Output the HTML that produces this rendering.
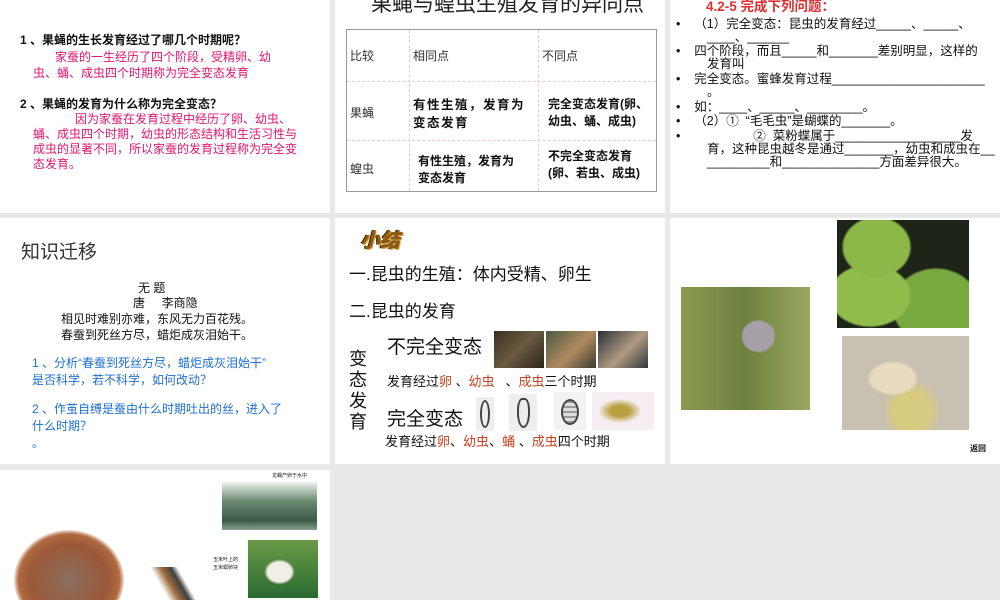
<!DOCTYPE html>
<html><head><meta charset="utf-8"><style>
*{margin:0;padding:0;box-sizing:border-box}
body{width:1000px;height:600px;background:#e8e8e8;position:relative;overflow:hidden;font-family:"Liberation Sans","Noto Sans CJK SC",sans-serif;color:#111}
.s{position:absolute;background:#fff;overflow:hidden}
.a{position:absolute;white-space:nowrap}
.pk{color:#e0156e}
.bl{color:#1f6fd0}
.rd{color:#c8401e}
.img{position:absolute}
</style></head><body>

<!-- slide 1 -->
<div class="s" style="left:0;top:0;width:330px;height:213px">
<div class="a" style="left:20px;top:31px;font-size:12px;font-weight:bold">1 、果蝇的生长发育经过了哪几个时期呢？</div>
<div class="a pk" style="left:55px;top:49px;font-size:12px;line-height:16px">家蚕的一生经历了四个阶段，受精卵、幼</div>
<div class="a pk" style="left:33px;top:64px;font-size:12px">虫、蛹、成虫四个时期称为完全变态发育</div>
<div class="a" style="left:20px;top:95px;font-size:12px;font-weight:bold">2 、果蝇的发育为什么称为完全变态？</div>
<div class="a pk" style="left:33px;top:112px;font-size:12px;line-height:15px;white-space:normal;width:272px;text-indent:42px">因为家蚕在发育过程中经历了卵、幼虫、蛹、成虫四个时期，幼虫的形态结构和生活习性与成虫的显著不同，所以家蚕的发育过程称为完全变态发育。</div>
</div>

<!-- slide 2 -->
<div class="s" style="left:335px;top:0;width:330px;height:213px">
<div class="a" style="left:36px;top:-12px;font-size:21px;color:#222">果蝇与蝗虫生殖发育的异同点</div>
<div style="position:absolute;left:11px;top:29px;width:311px;height:163px;border:1px solid #999"></div>
<div style="position:absolute;left:12px;top:81px;width:309px;border-top:1px dashed #f0c8d0"></div>
<div style="position:absolute;left:12px;top:140px;width:309px;border-top:1px dashed #f0c8d0"></div>
<div style="position:absolute;left:74px;top:30px;height:161px;border-left:1px dashed #f0c8d0"></div>
<div style="position:absolute;left:203px;top:30px;height:161px;border-left:1px dashed #f0c8d0"></div>
<div class="a" style="left:15px;top:47px;font-size:12px;color:#333">比较</div>
<div class="a" style="left:78px;top:47px;font-size:12px;color:#333">相同点</div>
<div class="a" style="left:207px;top:47px;font-size:12px;color:#333">不同点</div>
<div class="a" style="left:15px;top:104px;font-size:12px;color:#333">果蝇</div>
<div class="a" style="left:15px;top:160px;font-size:12px;color:#333">蝗虫</div>
<div class="a" style="left:78px;top:96px;font-size:12.5px;line-height:18px;letter-spacing:1.5px;font-weight:bold">有性生殖，发育为<br>变态发育</div>
<div class="a" style="left:213px;top:96px;font-size:12px;line-height:17px;font-weight:bold">完全变态发育(卵、<br>幼虫、蛹、成虫)</div>
<div class="a" style="left:83px;top:153px;font-size:12px;line-height:17px;font-weight:bold">有性生殖，发育为<br>变态发育</div>
<div class="a" style="left:213px;top:148px;font-size:12px;line-height:17px;font-weight:bold">不完全变态发育<br>(卵、若虫、成虫)</div>
</div>

<!-- slide 3 -->
<div class="s" style="left:670px;top:0;width:330px;height:213px;font-size:12.5px;line-height:13px">
<div class="a" style="left:36px;top:0;font-size:13.5px;font-weight:bold;color:#e03030">4.2-5 完成下列问题：</div>
<div class="a" style="left:6px;top:18px">•&nbsp;&nbsp;&nbsp; （1）完全变态：昆虫的发育经过_____、_____、</div>
<div class="a" style="left:37px;top:31px">____、______</div>
<div class="a" style="left:6px;top:45px">•&nbsp;&nbsp;&nbsp; 四个阶段，而且_____和_______差别明显，这样的</div>
<div class="a" style="left:37px;top:58px">发育叫</div>
<div class="a" style="left:6px;top:73px">•&nbsp;&nbsp;&nbsp; 完全变态。蜜蜂发育过程______________________</div>
<div class="a" style="left:37px;top:86px">。</div>
<div class="a" style="left:6px;top:101px">•&nbsp;&nbsp;&nbsp; 如：____、_____、________。</div>
<div class="a" style="left:6px;top:115px">•&nbsp;&nbsp;&nbsp; （2）①&nbsp; “毛毛虫”是蝴蝶的_______。</div>
<div class="a" style="left:6px;top:130px">•&nbsp;&nbsp;&nbsp;&nbsp;&nbsp;&nbsp;&nbsp;&nbsp;&nbsp;&nbsp;&nbsp;&nbsp;&nbsp;&nbsp;&nbsp;&nbsp;&nbsp;&nbsp;&nbsp;&nbsp; ②&nbsp; 菜粉蝶属于__________________发</div>
<div class="a" style="left:37px;top:143px">育，这种昆虫越冬是通过_______，幼虫和成虫在__</div>
<div class="a" style="left:37px;top:156px">_________和______________方面差异很大。</div>
</div>

<!-- slide 4 -->
<div class="s" style="left:0;top:218px;width:330px;height:246px">
<div class="a" style="left:21px;top:19px;font-size:19px;color:#333">知识迁移</div>
<div class="a" style="left:138px;top:61px;font-size:12px">无 题</div>
<div class="a" style="left:133px;top:76px;font-size:12px">唐&nbsp;&nbsp;&nbsp;&nbsp; 李商隐</div>
<div class="a" style="left:61px;top:92px;font-size:12px">相见时难别亦难，东风无力百花残。</div>
<div class="a" style="left:61px;top:108px;font-size:12px">春蚕到死丝方尽，蜡炬成灰泪始干。</div>
<div class="a bl" style="left:32px;top:137px;font-size:12px;line-height:17px">1 、分析“春蚕到死丝方尽，蜡炬成灰泪始干”<br>是否科学，若不科学，如何改动？</div>
<div class="a bl" style="left:32px;top:183px;font-size:12px;line-height:17px">2 、作茧自缚是蚕由什么时期吐出的丝，进入了<br>什么时期？<br>。</div>
</div>

<!-- slide 5 -->
<div class="s" style="left:335px;top:218px;width:330px;height:246px">
<div class="a" style="left:25px;top:6px;font-size:20px;font-weight:900;color:#8a5a10;font-style:italic;text-shadow:1px 1px 0 #d8a040,-1px 0 0 #3a2000">小结</div>
<div class="a" style="left:14px;top:42px;font-size:17px">一.昆虫的生殖：体内受精、卵生</div>
<div class="a" style="left:14px;top:79px;font-size:17px">二.昆虫的发育</div>
<div class="a" style="left:52px;top:114px;font-size:19px">不完全变态</div>
<div class="a" style="left:14px;top:131px;font-size:18px;line-height:21px;white-space:normal;width:20px">变态发育</div>
<div class="a" style="left:52px;top:153px;font-size:13px">发育经过<span class="rd">卵</span> 、<span class="rd">幼虫</span>&nbsp;&nbsp; 、<span class="rd">成虫</span>三个时期</div>
<div class="a" style="left:52px;top:186px;font-size:19px">完全变态</div>
<div class="a" style="left:50px;top:213px;font-size:13px">发育经过<span class="rd">卵</span>、<span class="rd">幼虫</span>、<span class="rd">蛹</span> 、<span class="rd">成虫</span>四个时期</div>
<div class="img" style="left:159px;top:113px;width:50px;height:37px;background:linear-gradient(135deg,#3a3020,#6a5a40 50%,#2a2418)"></div>
<div class="img" style="left:211px;top:113px;width:50px;height:37px;background:linear-gradient(135deg,#4a5a40,#b08a60 55%,#3a3a30)"></div>
<div class="img" style="left:263px;top:113px;width:50px;height:37px;background:linear-gradient(135deg,#2a3038,#b09a80 55%,#303840)"></div>
<div class="img" style="left:141px;top:179px;width:18px;height:34px;background:#eee"><div style="margin:3px 4px;width:10px;height:28px;border:2px solid #444;border-radius:50%"></div></div>
<div class="img" style="left:174px;top:176px;width:28px;height:37px;background:#eee"><div style="margin:4px 8px;width:13px;height:30px;border:2px solid #444;border-radius:40% 40% 50% 50%"></div></div>
<div class="img" style="left:219px;top:174px;width:32px;height:38px;background:#f2f2f2"><div style="margin:7px 7px;width:18px;height:26px;border:2px solid #444;border-radius:50%;background:repeating-linear-gradient(#999 0 2px,#ddd 2px 5px)"></div></div>
<div class="img" style="left:257px;top:174px;width:62px;height:38px;background:radial-gradient(ellipse at 45% 50%,#b8a040 0 20%,#f6eef2 45%)"></div>
</div>

<!-- slide 6 -->
<div class="s" style="left:670px;top:218px;width:330px;height:246px">
<div class="img" style="left:11px;top:69px;width:129px;height:123px;background:radial-gradient(ellipse at 60% 40%,#a8a0a8 0 14%,transparent 16%),linear-gradient(90deg,#8a9a50,#6e8040 50%,#9aa860)"></div>
<div class="img" style="left:167px;top:2px;width:132px;height:108px;background:radial-gradient(ellipse at 30% 25%,#8cb848 0 25%,transparent 27%),radial-gradient(ellipse at 25% 70%,#90bc4c 0 28%,transparent 30%),radial-gradient(ellipse at 75% 80%,#7aa840 0 30%,transparent 32%),#1e2418"></div>
<div class="img" style="left:172px;top:118px;width:127px;height:94px;background:radial-gradient(ellipse at 40% 45%,#e8dcc0 0 20%,transparent 24%),radial-gradient(ellipse at 55% 80%,#d8cc80 0 18%,transparent 30%),#c8c0b0"></div>
<div class="a" style="left:300px;top:225px;font-size:8px;font-weight:bold">返回</div>
</div>

<!-- slide 7 -->
<div class="s" style="left:0;top:470px;width:330px;height:130px">
<div class="a" style="left:272px;top:2px;font-size:5px">龙蝇产卵于水中</div>
<div class="img" style="left:222px;top:12px;width:95px;height:48px;background:linear-gradient(#eef2ee,#6a8a70 40%,#3a5a48 80%,#88a090)"></div>
<div class="a" style="left:213px;top:86px;font-size:5px;line-height:8px">玉米叶上的<br>玉米螟卵块</div>
<div class="img" style="left:248px;top:70px;width:70px;height:58px;background:radial-gradient(ellipse at 45% 55%,#f2f0e6 0 22%,transparent 28%),linear-gradient(#6a9a48,#2a6a30)"></div>
<div class="img" style="left:14px;top:60px;width:110px;height:100px;border-radius:50%;background:radial-gradient(ellipse at 50% 50%,#8a7060,#9a5838 50%,#b06a40 65%,#fff 72%)"></div>
<div class="img" style="left:148px;top:97px;width:50px;height:33px;background:linear-gradient(60deg,#fff 30%,#a07040 45%,#404040 60%,#fff 70%)"></div>
</div>

</body></html>
